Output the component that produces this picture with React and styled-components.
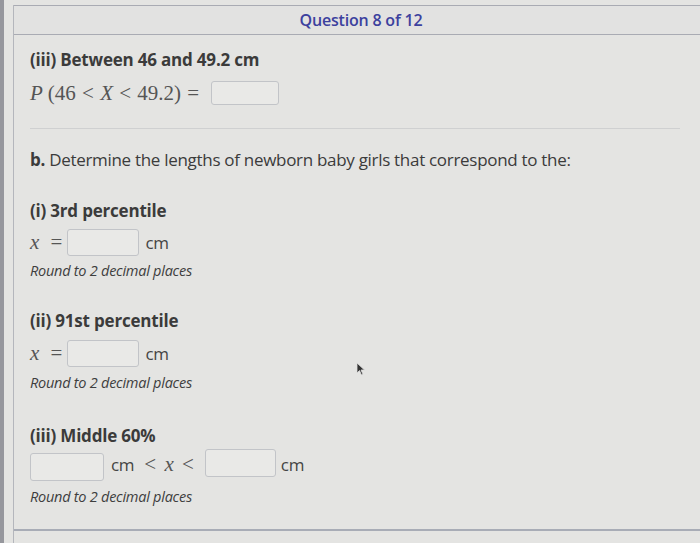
import React from "react";
import styled, { createGlobalStyle } from "styled-components";

const Global = createGlobalStyle`
  html, body {
    margin: 0;
    padding: 0;
    background: #e4e4e2;
  }
  body {
    font-family: "Open Sans", "Liberation Sans", sans-serif;
    color: #3b3b3b;
  }
`;

const Frame = styled.div`
  width: 700px;
  height: 543px;
  display: flex;
  background: #e4e4e2;
  overflow: hidden;
  position: relative;
`;

const Strip = styled.div`
  width: 4px;
  background: #96979d;
  flex: none;
`;

const Panel = styled.div`
  flex: 1;
  margin-left: 9px;
  margin-top: 5px;
  border-left: 1px solid #b4b6bc;
  display: flex;
  flex-direction: column;
`;

const Header = styled.div`
  height: 28px;
  border-top: 1px solid #a9abb3;
  border-bottom: 1px solid #a9abb3;
  background: #e2e2e1;
  display: flex;
  align-items: center;
  justify-content: center;
  padding-right: 12px;
`;

const Title = styled.div`
  font-size: 16px;
  font-weight: 600;
  color: #3c419e;
  letter-spacing: -0.2px;
  margin-left: 20px;
`;

const Body = styled.div`
  flex: 1;
  padding: 0 16px;
  display: flex;
  flex-direction: column;
  border-bottom: 2px solid #a8acb6;
  margin-bottom: 12px;
`;

const Section = styled.div`
  display: flex;
  flex-direction: column;
  padding-top: ${(p) => p.$top}px;
`;

const Heading = styled.div`
  font-size: 17px;
  font-weight: 700;
  color: #3b3b3b;
  letter-spacing: -0.2px;
  line-height: 22px;
  white-space: nowrap;
`;

const Row = styled.div`
  display: flex;
  align-items: center;
  margin-top: ${(p) => p.$top || 0}px;
  height: 28px;
`;

const Math = styled.span`
  font-family: "Liberation Serif", "Times New Roman", serif;
  font-style: ${(p) => (p.$upright ? "normal" : "italic")};
  font-size: 21px;
  color: #555;
  letter-spacing: ${(p) => p.$ls || 0}px;
  word-spacing: ${(p) => p.$ws || 0}px;
  margin-right: ${(p) => p.$mr || 0}px;
  margin-left: ${(p) => p.$ml || 0}px;
  white-space: pre;
`;

const Box = styled.div`
  width: ${(p) => p.$w}px;
  height: ${(p) => p.$h || 25}px;
  border: 1.5px solid #c2c4c8;
  border-radius: 3px;
  background: #e9e9e7;
  box-sizing: border-box;
  flex: none;
  margin-top: ${(p) => p.$dy || 0}px;
`;

const Unit = styled.span`
  font-size: 17px;
  color: #444;
  margin-left: ${(p) => p.$ml || 6}px;
  letter-spacing: -0.3px;
`;

const Hint = styled.div`
  font-size: 14.5px;
  font-style: italic;
  color: #3e3e3e;
  letter-spacing: -0.25px;
  line-height: 20px;
  margin-top: ${(p) => p.$top || 6}px;
`;

const Divider = styled.div`
  height: 1px;
  background: #cfd0d1;
  margin: 21px 4px 0 0;
`;

const Prompt = styled.div`
  font-size: 17px;
  line-height: 24px;
  color: #3b3b3b;
  letter-spacing: -0.3px;
  margin-top: 19px;
  white-space: nowrap;
  b {
    font-weight: 700;
  }
`;

const Cursor = styled.svg`
  position: absolute;
  left: 356px;
  top: 362px;
`;

export default function App() {
  return (
    <Frame>
      <Global />
      <Strip />
      <Panel>
        <Header>
          <Title>Question 8 of 12</Title>
        </Header>
        <Body>
          <Section $top={14}>
            <Heading>(iii) Between 46 and 49.2 cm</Heading>
            <Row $top={8}>
              <Math>P</Math>
              <Math $upright $ml={5} $ws={1}>(46 {"< "}</Math>
              <Math>X</Math>
              <Math $upright $ws={1}>{" < 49.2) ="}</Math>
              <Math $upright $mr={7}> </Math>
              <Box $w={68} $h={24} />
            </Row>
          </Section>
          <Divider />
          <Prompt>
            <b>b.</b> Determine the lengths of newborn baby girls that correspond to the:
          </Prompt>
          <Section $top={28}>
            <Heading>(i) 3rd percentile</Heading>
            <Row $top={6}>
              <Math>x</Math>
              <Math $upright $mr={5} $ml={6}>{" ="}</Math>
              <Box $w={72} $h={27} />
              <Unit>cm</Unit>
            </Row>
            <Hint $top={5}>Round to 2 decimal places</Hint>
          </Section>
          <Section $top={29}>
            <Heading>(ii) 91st percentile</Heading>
            <Row $top={7}>
              <Math>x</Math>
              <Math $upright $mr={5} $ml={6}>{" ="}</Math>
              <Box $w={72} $h={27} />
              <Unit>cm</Unit>
            </Row>
            <Hint $top={6}>Round to 2 decimal places</Hint>
          </Section>
          <Section $top={32}>
            <Heading>(iii) Middle 60%</Heading>
            <Row $top={3}>
              <Box $w={74} $h={28} $dy={5} />
              <Unit $ml={7}>cm</Unit>
              <Math $upright $ml={10} $ws={3}>{"< "}</Math>
              <Math>x</Math>
              <Math $upright $mr={11} $ws={3}>{" <"}</Math>
              <Box $w={71} $h={28} $dy={-3} />
              <Unit $ml={5}>cm</Unit>
            </Row>
            <Hint $top={9}>Round to 2 decimal places</Hint>
          </Section>
        </Body>
      </Panel>
      <Cursor width="10" height="14" viewBox="0 0 10 14">
        <path d="M1 1 L1 11 L3.5 8.5 L5.5 13 L7 12.3 L5 8 L8.5 8 Z" fill="#333" stroke="#ddd" strokeWidth="0.8" />
      </Cursor>
    </Frame>
  );
}
